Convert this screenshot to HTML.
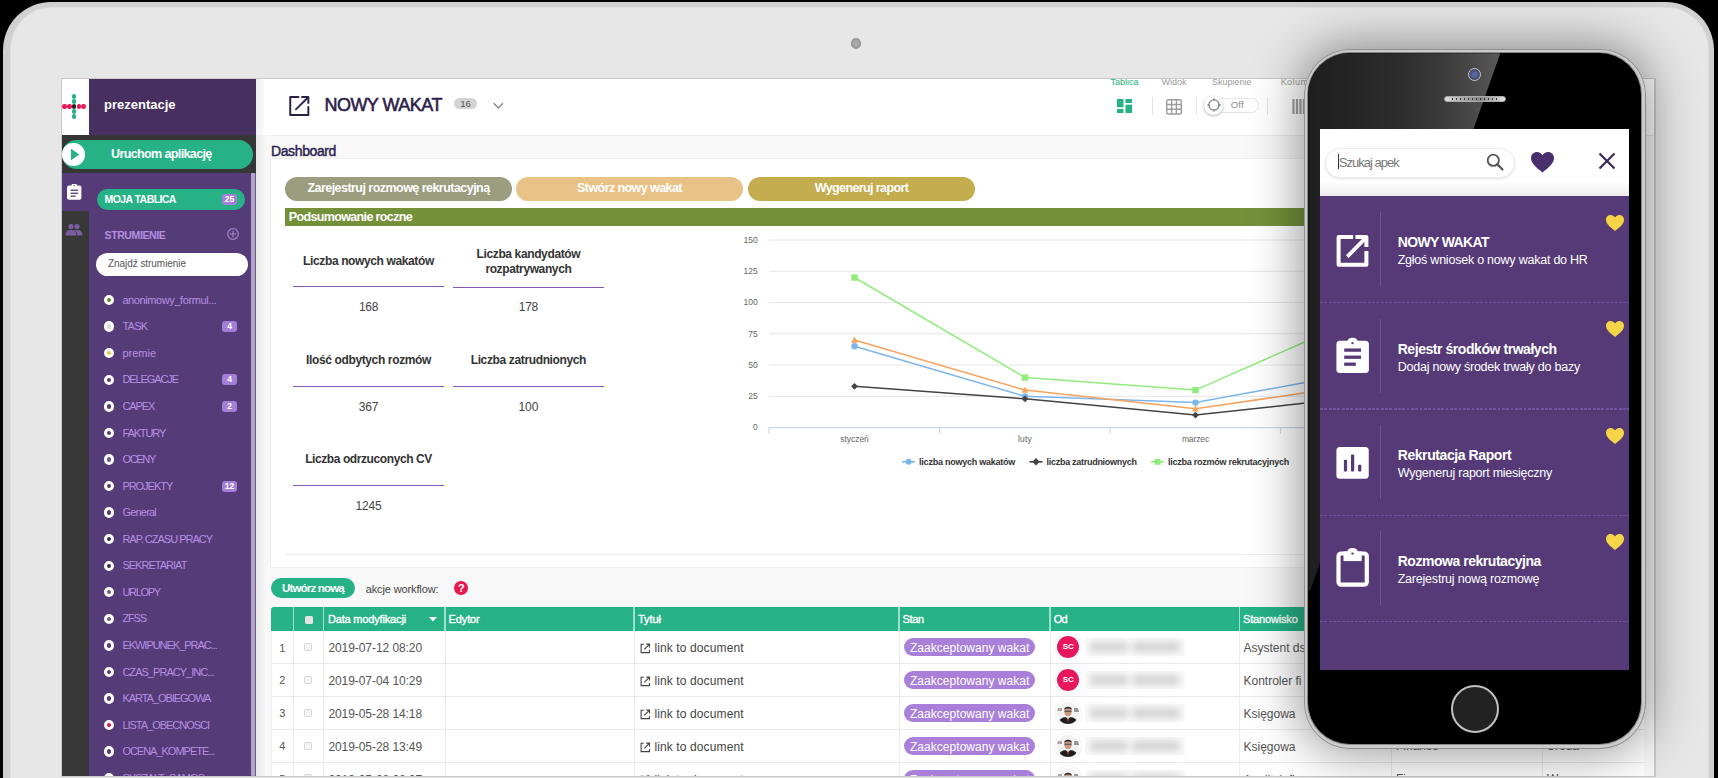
<!DOCTYPE html><html><head><meta charset="utf-8"><style>
*{box-sizing:border-box;margin:0;padding:0}
html,body{width:1718px;height:778px;overflow:hidden;background:#000;font-family:"Liberation Sans",sans-serif}
.a{position:absolute}
.t{position:absolute;white-space:nowrap}
#tab{left:2.8px;top:1.9px;width:1711.2px;height:860px;border-radius:48px;background:#e7e7e7;border-style:solid;border-color:#d0d0d0;border-width:5.2px 5px 0 7px;box-shadow:inset 0 0 0 0.8px #dcdcdc}
#scrb{left:60.5px;top:77.5px;width:1595.5px;height:699.5px;background:#c9c9c9}
#scr{left:62px;top:79px;width:1592px;height:697px;background:#fff;overflow:hidden}
#pg{left:-62px;top:-79px;width:1718px;height:778px}
#cam{left:851px;top:38.3px;width:10.4px;height:10.4px;border-radius:50%;background:#a9a9a9;border:2px solid #999}
.dot{position:absolute;left:103.8px;width:10.4px;height:10.4px;border-radius:50%;border:3px solid #fff}
.bdg{position:absolute;left:222px;width:15px;height:11px;border-radius:3px;background:#a47fd8;color:#fff;font-size:8.5px;text-align:center;line-height:11px;font-weight:bold}
</style></head><body>
<div id="tab" class="a"></div><div id="cam" class="a"></div>
<div id="scrb" class="a"></div><div id="scr" class="a"><div id="pg" class="a">
<div class="a" style="left:256px;top:135px;width:1400px;height:641px;background:#f8f8f8"></div>
<div class="a" style="left:271px;top:134.5px;width:1400px;height:1px;background:#e9e9e9"></div>
<div class="a" style="left:62px;top:79px;width:27px;height:56px;background:#fff"></div>
<div class="a" style="left:62.10px;top:104.30px;width:4.6px;height:4.6px;border-radius:50%;background:#e8185a"></div>
<div class="a" style="left:67.00px;top:104.30px;width:4.6px;height:4.6px;border-radius:50%;background:#e8185a"></div>
<div class="a" style="left:76.50px;top:104.30px;width:4.6px;height:4.6px;border-radius:50%;background:#e8185a"></div>
<div class="a" style="left:81.30px;top:104.30px;width:4.6px;height:4.6px;border-radius:50%;background:#e8185a"></div>
<div class="a" style="left:71.80px;top:94.20px;width:4.6px;height:4.6px;border-radius:50%;background:#23b283"></div>
<div class="a" style="left:71.80px;top:99.30px;width:4.6px;height:4.6px;border-radius:50%;background:#23b283"></div>
<div class="a" style="left:71.80px;top:109.20px;width:4.6px;height:4.6px;border-radius:50%;background:#23b283"></div>
<div class="a" style="left:71.80px;top:114.20px;width:4.6px;height:4.6px;border-radius:50%;background:#23b283"></div>
<div class="a" style="left:71.80px;top:104.30px;width:4.6px;height:4.6px;border-radius:50%;background:#222"></div>
<div class="a" style="left:89px;top:79px;width:167px;height:56px;background:#472f60"></div>
<div id="t1" class="t" style="top:98.15px;font-size:13px;line-height:13px;color:#fff;font-weight:bold;letter-spacing:0.005px;left:104.00px;">prezentacje</div>
<div class="a" style="left:62px;top:135px;width:194px;height:38px;background:#363636"></div>
<div class="a" style="left:62px;top:139.8px;width:190.5px;height:29.4px;border-radius:15px;background:#27b285"></div>
<div class="a" style="left:62.2px;top:143.1px;width:22.6px;height:22.6px;border-radius:50%;background:#fff"></div>
<svg class="a" style="left:62px;top:139px" width="24" height="30"><path d="M9 9.8 L17.3 15.5 L9 21.2 Z" fill="#27b285"/></svg>
<div id="t2" class="t" style="top:148.49px;font-size:12.5px;line-height:12.5px;color:#fff;font-weight:bold;letter-spacing:-0.615px;left:111.00px;">Uruchom aplikację</div>
<div class="a" style="left:62px;top:173px;width:27px;height:603px;background:#383838"></div>
<div class="a" style="left:62px;top:173px;width:27px;height:38px;background:#553b78"></div>
<svg class="a" style="left:66px;top:183px" width="17" height="18"><rect x="1" y="2.5" width="14.4" height="14.3" rx="2" fill="#fff"/><rect x="5.5" y="1" width="5.4" height="3" rx="1.2" fill="#fff"/><circle cx="8.2" cy="2.4" r="0.6" fill="#553b78"/><rect x="4.6" y="6.6" width="7.4" height="1.3" fill="#553b78"/><rect x="4.6" y="9.6" width="7.4" height="1.3" fill="#553b78"/><rect x="4.6" y="12.5" width="5" height="1.3" fill="#553b78"/></svg>
<svg class="a" style="left:65px;top:223px" width="18" height="14"><circle cx="6" cy="3.5" r="2.6" fill="#7a5ea0"/><circle cx="12" cy="3.5" r="2.6" fill="#7a5ea0"/><path d="M0.5 12.5 C0.5 8 3 7 6 7 C9 7 11.5 8 11.5 12.5 Z" fill="#7a5ea0"/><path d="M9 7.3 C10 7 11 7 12 7 C15 7 17.5 8 17.5 12.5 L12.5 12.5 C12.5 10 11 8 9 7.3Z" fill="#7a5ea0"/></svg>
<div class="a" style="left:89px;top:173px;width:162px;height:603px;background:#553b78"></div>
<div class="a" style="left:251px;top:173px;width:5px;height:603px;background:#6d5a88"></div>
<div class="a" style="left:251.4px;top:173px;width:3.4px;height:603px;background:#b2a4c6;border-radius:1px"></div>
<div class="a" style="left:256px;top:79px;width:10px;height:697px;background:linear-gradient(90deg,rgba(0,0,0,0.07),rgba(0,0,0,0))"></div>
<div class="a" style="left:96.8px;top:188.5px;width:148px;height:21.7px;border-radius:11px;background:#27b285"></div>
<div id="t3" class="t" style="top:194.27px;font-size:10.5px;line-height:10.5px;color:#fff;font-weight:bold;letter-spacing:-0.564px;left:104.50px;">MOJA TABLICA</div>
<div class="bdg" style="top:194px">25</div>
<div id="t4" class="t" style="top:229.87px;font-size:10.5px;line-height:10.5px;color:#b48fe0;font-weight:bold;letter-spacing:-0.377px;left:104.50px;">STRUMIENIE</div>
<svg class="a" style="left:226px;top:227px" width="14" height="14"><circle cx="7" cy="7" r="5.3" fill="none" stroke="#9f80c8" stroke-width="1.2"/><path d="M7 3.8V10.2M3.8 7H10.2" stroke="#9f80c8" stroke-width="1.2"/></svg>
<div class="a" style="left:96px;top:252.8px;width:151.7px;height:23.2px;border-radius:12px;background:#fff"></div>
<div id="t5" class="t" style="top:259.12px;font-size:10px;line-height:10px;color:#555;font-weight:normal;letter-spacing:-0.054px;left:108.00px;">Znajdź strumienie</div>
<div class="dot" style="top:294.90px;background:#6a8a2a"></div>
<div id="t6" class="t" style="top:294.73px;font-size:11px;line-height:11px;color:#b78fe2;font-weight:normal;letter-spacing:-0.405px;left:122.40px;">anonimowy_formul...</div>
<div class="dot" style="top:321.46px;background:#d8d8d8"></div>
<div id="t7" class="t" style="top:321.29px;font-size:11px;line-height:11px;color:#b78fe2;font-weight:normal;letter-spacing:-0.730px;left:122.40px;">TASK</div>
<div class="bdg" style="top:321.16px">4</div>
<div class="dot" style="top:348.02px;background:#f0c93a"></div>
<div id="t8" class="t" style="top:347.85px;font-size:11px;line-height:11px;color:#b78fe2;font-weight:normal;letter-spacing:0.000px;left:122.40px;">premie</div>
<div class="dot" style="top:374.58px;background:#553b78"></div>
<div id="t9" class="t" style="top:374.41px;font-size:11px;line-height:11px;color:#b78fe2;font-weight:normal;letter-spacing:-1.091px;left:122.40px;">DELEGACJE</div>
<div class="bdg" style="top:374.28px">4</div>
<div class="dot" style="top:401.14px;background:#553b78"></div>
<div id="t10" class="t" style="top:400.97px;font-size:11px;line-height:11px;color:#b78fe2;font-weight:normal;letter-spacing:-1.059px;left:122.40px;">CAPEX</div>
<div class="bdg" style="top:400.84px">2</div>
<div class="dot" style="top:427.70px;background:#553b78"></div>
<div id="t11" class="t" style="top:427.53px;font-size:11px;line-height:11px;color:#b78fe2;font-weight:normal;letter-spacing:-1.104px;left:122.40px;">FAKTURY</div>
<div class="dot" style="top:454.26px;background:#6c5a8a"></div>
<div id="t12" class="t" style="top:454.09px;font-size:11px;line-height:11px;color:#b78fe2;font-weight:normal;letter-spacing:-1.285px;left:122.40px;">OCENY</div>
<div class="dot" style="top:480.82px;background:#553b78"></div>
<div id="t13" class="t" style="top:480.65px;font-size:11px;line-height:11px;color:#b78fe2;font-weight:normal;letter-spacing:-1.035px;left:122.40px;">PROJEKTY</div>
<div class="bdg" style="top:480.52px">12</div>
<div class="dot" style="top:507.38px;background:#553b78"></div>
<div id="t14" class="t" style="top:507.21px;font-size:11px;line-height:11px;color:#b78fe2;font-weight:normal;letter-spacing:-0.792px;left:122.40px;">General</div>
<div class="dot" style="top:533.94px;background:#3a2a50"></div>
<div id="t15" class="t" style="top:533.77px;font-size:11px;line-height:11px;color:#b78fe2;font-weight:normal;letter-spacing:-0.985px;left:122.40px;">RAP. CZASU PRACY</div>
<div class="dot" style="top:560.50px;background:#3a2a50"></div>
<div id="t16" class="t" style="top:560.33px;font-size:11px;line-height:11px;color:#b78fe2;font-weight:normal;letter-spacing:-0.980px;left:122.40px;">SEKRETARIAT</div>
<div class="dot" style="top:587.06px;background:#6c5a8a"></div>
<div id="t17" class="t" style="top:586.89px;font-size:11px;line-height:11px;color:#b78fe2;font-weight:normal;letter-spacing:-1.325px;left:122.40px;">URLOPY</div>
<div class="dot" style="top:613.62px;background:#6c5a8a"></div>
<div id="t18" class="t" style="top:613.45px;font-size:11px;line-height:11px;color:#b78fe2;font-weight:normal;letter-spacing:-1.156px;left:122.40px;">ZFSS</div>
<div class="dot" style="top:640.18px;background:#553b78"></div>
<div id="t19" class="t" style="top:640.01px;font-size:11px;line-height:11px;color:#b78fe2;font-weight:normal;letter-spacing:-1.027px;left:122.40px;">EKWIPUNEK_PRAC...</div>
<div class="dot" style="top:666.74px;background:#553b78"></div>
<div id="t20" class="t" style="top:666.57px;font-size:11px;line-height:11px;color:#b78fe2;font-weight:normal;letter-spacing:-0.964px;left:122.40px;">CZAS_PRACY_INC...</div>
<div class="dot" style="top:693.30px;background:#553b78"></div>
<div id="t21" class="t" style="top:693.13px;font-size:11px;line-height:11px;color:#b78fe2;font-weight:normal;letter-spacing:-1.036px;left:122.40px;">KARTA_OBIEGOWA</div>
<div class="dot" style="top:719.86px;background:#e0104a"></div>
<div id="t22" class="t" style="top:719.69px;font-size:11px;line-height:11px;color:#b78fe2;font-weight:normal;letter-spacing:-1.019px;left:122.40px;">LISTA_OBECNOSCI</div>
<div class="dot" style="top:746.42px;background:#553b78"></div>
<div id="t23" class="t" style="top:746.25px;font-size:11px;line-height:11px;color:#b78fe2;font-weight:normal;letter-spacing:-1.013px;left:122.40px;">OCENA_KOMPETE...</div>
<div class="dot" style="top:772.98px;background:#553b78"></div>
<div id="t24" class="t" style="top:772.81px;font-size:11px;line-height:11px;color:#b78fe2;font-weight:normal;letter-spacing:-0.944px;left:122.40px;">SYSZALT_SAMOS...</div>
<svg class="a" style="left:284px;top:90px" width="32" height="32"><path d="M15.2 7.05 H6.25 V24.95 H24.35 V16.3" fill="none" stroke="#2b2048" stroke-width="1.95" stroke-linejoin="round"/><path d="M17.3 7.05 H24.35 V13.8" fill="none" stroke="#2b2048" stroke-width="1.95" stroke-linejoin="round"/><path d="M11.4 19.9 L23.9 7.5" stroke="#2b2048" stroke-width="1.9"/></svg>
<div id="t25" class="t" style="top:95.91px;font-size:18px;line-height:18px;color:#2b2048;font-weight:normal;letter-spacing:-0.507px;-webkit-text-stroke:0.55px #2b2048;left:324.40px;">NOWY WAKAT</div>
<div class="a" style="left:454px;top:97.9px;width:23.3px;height:11.5px;border-radius:6px;background:#d3d3d3"></div>
<div id="t26" class="t" style="top:98.96px;font-size:9.5px;line-height:9.5px;color:#555;font-weight:normal;letter-spacing:0.000px;left:165.60px;width:600px;text-align:center;">16</div>
<svg class="a" style="left:490px;top:100px" width="16" height="12"><path d="M3.7 3.2 L8.35 8 L13 3.2" fill="none" stroke="#888" stroke-width="1.3"/></svg>
<div id="t27" class="t" style="top:77.60px;font-size:9px;line-height:9px;color:#27b285;font-weight:normal;letter-spacing:-0.002px;left:1110.40px;">Tablica</div>
<div id="t28" class="t" style="top:77.60px;font-size:9px;line-height:9px;color:#9a9a9a;font-weight:normal;letter-spacing:-0.003px;left:1161.60px;">Widok</div>
<div id="t29" class="t" style="top:77.60px;font-size:9px;line-height:9px;color:#9a9a9a;font-weight:normal;letter-spacing:-0.003px;left:1212.00px;">Skupienie</div>
<div id="t30" class="t" style="top:77.60px;font-size:9px;line-height:9px;color:#9a9a9a;font-weight:normal;letter-spacing:0.426px;left:1280.70px;">Kolumny</div>
<svg class="a" style="left:1117px;top:99px" width="15" height="14"><rect x="0" y="0" width="6.5" height="8.3" fill="#27b285"/><rect x="0" y="10" width="6.5" height="4" fill="#27b285"/><rect x="8.5" y="0" width="6.5" height="4" fill="#27b285"/><rect x="8.5" y="5.7" width="6.5" height="8.3" fill="#27b285"/></svg>
<div class="a" style="left:1151.9px;top:97px;width:1px;height:18px;background:#e3e3e3"></div>
<div class="a" style="left:1195.7px;top:97px;width:1px;height:18px;background:#e3e3e3"></div>
<div class="a" style="left:1266.7px;top:97px;width:1px;height:18px;background:#e3e3e3"></div>
<svg class="a" style="left:1166px;top:99px" width="16" height="16"><rect x="0.7" y="0.7" width="14.6" height="14.3" rx="1.5" fill="none" stroke="#9c9c9c" stroke-width="1.4"/><path d="M5.6 0.7V15M10.4 0.7V15M0.7 5.5H15.3M0.7 10.3H15.3" stroke="#9c9c9c" stroke-width="1.4"/></svg>
<div class="a" style="left:1203.8px;top:97.7px;width:55px;height:15.4px;border-radius:8px;background:#fff;border:1px solid #e6e6e6"></div>
<div class="a" style="left:1203.9px;top:95.8px;width:19.2px;height:19.2px;border-radius:50%;background:#fff;box-shadow:0 1px 3px rgba(0,0,0,0.3)"></div>
<svg class="a" style="left:1205.5px;top:97.4px" width="16" height="16"><circle cx="8" cy="8" r="5.2" fill="none" stroke="#777" stroke-width="1.1"/><path d="M8 1.2V4M8 12V14.8M1.2 8H4M12 8H14.8" stroke="#777" stroke-width="1.1"/></svg>
<div id="t31" class="t" style="top:100.36px;font-size:9.5px;line-height:9.5px;color:#8a8a8a;font-weight:normal;letter-spacing:0.167px;left:1230.70px;">Off</div>
<svg class="a" style="left:1292px;top:99px" width="16" height="15"><path d="M1.5 0V15M5 0V15M8.5 0V15M12 0V15" stroke="#a0a0a0" stroke-width="2.2"/></svg>
<div id="t32" class="t" style="top:144.01px;font-size:14px;line-height:14px;color:#2b2350;font-weight:normal;letter-spacing:-0.389px;-webkit-text-stroke:0.45px #2b2350;left:271.00px;">Dashboard</div>
<div class="a" style="left:270.5px;top:158.7px;width:1375px;height:408.4px;background:#fff;box-shadow:0 0 0 1px #efefef"></div>
<div class="a" style="left:285px;top:177px;width:227.0px;height:23.5px;border-radius:12px;background:#9c9c7e"></div>
<div id="t33" class="t" style="top:182.49px;font-size:12.5px;line-height:12.5px;color:#fff;font-weight:bold;letter-spacing:-0.537px;left:98.50px;width:600px;text-align:center;">Zarejestruj rozmowę rekrutacyjną</div>
<div class="a" style="left:516.3px;top:177px;width:226.4px;height:23.5px;border-radius:12px;background:#e8c287"></div>
<div id="t34" class="t" style="top:182.49px;font-size:12.5px;line-height:12.5px;color:#fff;font-weight:bold;letter-spacing:-0.577px;left:329.50px;width:600px;text-align:center;">Stwórz nowy wakat</div>
<div class="a" style="left:748px;top:177px;width:227.0px;height:23.5px;border-radius:12px;background:#c4ad4e"></div>
<div id="t35" class="t" style="top:182.49px;font-size:12.5px;line-height:12.5px;color:#fff;font-weight:bold;letter-spacing:-0.604px;left:561.50px;width:600px;text-align:center;">Wygeneruj raport</div>
<div class="a" style="left:285px;top:208px;width:1360px;height:18px;background:#74913a"></div>
<div id="t36" class="t" style="top:211.09px;font-size:12.5px;line-height:12.5px;color:#fff;font-weight:bold;letter-spacing:-0.634px;left:288.70px;">Podsumowanie roczne</div>
<div id="t37" class="t" style="top:254.84px;font-size:12px;line-height:12px;color:#333;font-weight:bold;letter-spacing:-0.376px;left:68.50px;width:600px;text-align:center;">Liczba nowych wakatów</div>
<div class="a" style="left:293.3px;top:285.75px;width:150.4px;height:1.3px;background:#8a58bc"></div>
<div id="t38" class="t" style="top:300.74px;font-size:12px;line-height:12px;color:#444;font-weight:normal;letter-spacing:-0.277px;left:68.50px;width:600px;text-align:center;">168</div>
<div id="t39" class="t" style="top:247.64px;font-size:12px;line-height:12px;color:#333;font-weight:bold;letter-spacing:-0.372px;left:228.40px;width:600px;text-align:center;">Liczba kandydatów</div>
<div id="t40" class="t" style="top:262.64px;font-size:12px;line-height:12px;color:#333;font-weight:bold;letter-spacing:-0.383px;left:228.40px;width:600px;text-align:center;">rozpatrywanych</div>
<div class="a" style="left:453.2px;top:286.75px;width:150.4px;height:1.3px;background:#8a58bc"></div>
<div id="t41" class="t" style="top:301.44px;font-size:12px;line-height:12px;color:#444;font-weight:normal;letter-spacing:-0.244px;left:228.40px;width:600px;text-align:center;">178</div>
<div id="t42" class="t" style="top:354.34px;font-size:12px;line-height:12px;color:#333;font-weight:bold;letter-spacing:-0.366px;left:68.50px;width:600px;text-align:center;">Ilość odbytych rozmów</div>
<div class="a" style="left:293.3px;top:385.85px;width:150.4px;height:1.3px;background:#8a58bc"></div>
<div id="t43" class="t" style="top:400.54px;font-size:12px;line-height:12px;color:#444;font-weight:normal;letter-spacing:-0.110px;left:68.50px;width:600px;text-align:center;">367</div>
<div id="t44" class="t" style="top:354.34px;font-size:12px;line-height:12px;color:#333;font-weight:bold;letter-spacing:-0.364px;left:228.40px;width:600px;text-align:center;">Liczba zatrudnionych</div>
<div class="a" style="left:453.2px;top:385.85px;width:150.4px;height:1.3px;background:#8a58bc"></div>
<div id="t45" class="t" style="top:400.54px;font-size:12px;line-height:12px;color:#444;font-weight:normal;letter-spacing:-0.110px;left:228.40px;width:600px;text-align:center;">100</div>
<div id="t46" class="t" style="top:453.44px;font-size:12px;line-height:12px;color:#333;font-weight:bold;letter-spacing:-0.412px;left:68.50px;width:600px;text-align:center;">Liczba odrzuconych CV</div>
<div class="a" style="left:293.3px;top:484.85px;width:150.4px;height:1.3px;background:#8a58bc"></div>
<div id="t47" class="t" style="top:499.54px;font-size:12px;line-height:12px;color:#444;font-weight:normal;letter-spacing:-0.126px;left:68.50px;width:600px;text-align:center;">1245</div>
<div class="a" style="left:285px;top:554px;width:1360px;height:1px;background:#eeeeee"></div>
<svg class="a" style="left:0;top:0" width="1718" height="778"><line x1="769" x2="1645" y1="396.33" y2="396.33" stroke="#e6e6e6" stroke-width="1"/><line x1="769" x2="1645" y1="365.07" y2="365.07" stroke="#e6e6e6" stroke-width="1"/><line x1="769" x2="1645" y1="333.80" y2="333.80" stroke="#e6e6e6" stroke-width="1"/><line x1="769" x2="1645" y1="302.53" y2="302.53" stroke="#e6e6e6" stroke-width="1"/><line x1="769" x2="1645" y1="271.26" y2="271.26" stroke="#e6e6e6" stroke-width="1"/><line x1="769" x2="1645" y1="240.00" y2="240.00" stroke="#e6e6e6" stroke-width="1"/><line x1="769" x2="1645" y1="427.6" y2="427.6" stroke="#ccd6eb" stroke-width="1.2"/><line x1="769.0" x2="769.0" y1="427.6" y2="433.6" stroke="#ccd6eb" stroke-width="1.2"/><line x1="939.5" x2="939.5" y1="427.6" y2="433.6" stroke="#ccd6eb" stroke-width="1.2"/><line x1="1110.0" x2="1110.0" y1="427.6" y2="433.6" stroke="#ccd6eb" stroke-width="1.2"/><line x1="1280.5" x2="1280.5" y1="427.6" y2="433.6" stroke="#ccd6eb" stroke-width="1.2"/><line x1="1451.0" x2="1451.0" y1="427.6" y2="433.6" stroke="#ccd6eb" stroke-width="1.2"/><line x1="1621.5" x2="1621.5" y1="427.6" y2="433.6" stroke="#ccd6eb" stroke-width="1.2"/><polyline points="854.5,346.30 1025.0,396.33 1195.5,402.59 1366.0,371.32" fill="none" stroke="#7cb5ec" stroke-width="1.5"/><circle cx="854.5" cy="346.30" r="3.2" fill="#7cb5ec"/><circle cx="1025" cy="396.33" r="3.2" fill="#7cb5ec"/><circle cx="1195.5" cy="402.59" r="3.2" fill="#7cb5ec"/><circle cx="1366" cy="371.32" r="3.2" fill="#7cb5ec"/><polyline points="854.5,386.33 1025.0,398.83 1195.5,415.09 1366.0,396.33" fill="none" stroke="#434348" stroke-width="1.5"/><path d="M854.5 382.93 L857.9 386.33 L854.5 389.73 L851.1 386.33Z" fill="#434348"/><path d="M1025 395.43 L1028.4 398.83 L1025 402.23 L1021.6 398.83Z" fill="#434348"/><path d="M1195.5 411.69 L1198.9 415.09 L1195.5 418.49 L1192.1 415.09Z" fill="#434348"/><path d="M1366 392.93 L1369.4 396.33 L1366 399.73 L1362.6 396.33Z" fill="#434348"/><polyline points="854.5,277.52 1025.0,377.57 1195.5,390.08 1366.0,315.04" fill="none" stroke="#90ed7d" stroke-width="1.5"/><rect x="851.3" y="274.32" width="6.4" height="6.4" fill="#90ed7d"/><rect x="1021.8" y="374.37" width="6.4" height="6.4" fill="#90ed7d"/><rect x="1192.3" y="386.88" width="6.4" height="6.4" fill="#90ed7d"/><rect x="1362.8" y="311.84" width="6.4" height="6.4" fill="#90ed7d"/><polyline points="854.5,340.05 1025.0,390.08 1195.5,408.84 1366.0,383.83" fill="none" stroke="#f7a35c" stroke-width="1.5"/><path d="M854.5 336.45 L857.9 342.65 L851.1 342.65Z" fill="#f7a35c"/><path d="M1025 386.48 L1028.4 392.68 L1021.6 392.68Z" fill="#f7a35c"/><path d="M1195.5 405.24 L1198.9 411.44 L1192.1 411.44Z" fill="#f7a35c"/><path d="M1366 380.23 L1369.4 386.43 L1362.6 386.43Z" fill="#f7a35c"/><line x1="902" x2="915" y1="461.8" y2="461.8" stroke="#7cb5ec" stroke-width="1.6"/><circle cx="908.6" cy="461.8" r="3" fill="#7cb5ec"/><line x1="1029.5" x2="1042.5" y1="461.8" y2="461.8" stroke="#434348" stroke-width="1.6"/><path d="M1036 458.1 L1039.7 461.8 L1036 465.5 L1032.3 461.8Z" fill="#434348"/><line x1="1151" x2="1164" y1="461.8" y2="461.8" stroke="#90ed7d" stroke-width="1.6"/><rect x="1154.6" y="458.8" width="6" height="6" fill="#90ed7d"/></svg>
<div class="t" style="left:657.7px;width:100px;text-align:right;top:423.30px;font-size:8.5px;line-height:8.5px;color:#666">0</div>
<div class="t" style="left:657.7px;width:100px;text-align:right;top:392.03px;font-size:8.5px;line-height:8.5px;color:#666">25</div>
<div class="t" style="left:657.7px;width:100px;text-align:right;top:360.77px;font-size:8.5px;line-height:8.5px;color:#666">50</div>
<div class="t" style="left:657.7px;width:100px;text-align:right;top:329.50px;font-size:8.5px;line-height:8.5px;color:#666">75</div>
<div class="t" style="left:657.7px;width:100px;text-align:right;top:298.23px;font-size:8.5px;line-height:8.5px;color:#666">100</div>
<div class="t" style="left:657.7px;width:100px;text-align:right;top:266.96px;font-size:8.5px;line-height:8.5px;color:#666">125</div>
<div class="t" style="left:657.7px;width:100px;text-align:right;top:235.70px;font-size:8.5px;line-height:8.5px;color:#666">150</div>
<div id="t48" class="t" style="top:434.65px;font-size:8.5px;line-height:8.5px;color:#666;font-weight:normal;letter-spacing:-0.033px;left:554.50px;width:600px;text-align:center;">styczeń</div>
<div id="t49" class="t" style="top:434.65px;font-size:8.5px;line-height:8.5px;color:#666;font-weight:normal;letter-spacing:0.191px;left:725.00px;width:600px;text-align:center;">luty</div>
<div id="t50" class="t" style="top:434.65px;font-size:8.5px;line-height:8.5px;color:#666;font-weight:normal;letter-spacing:-0.113px;left:895.50px;width:600px;text-align:center;">marzec</div>
<div id="t51" class="t" style="top:458.20px;font-size:9px;line-height:9px;color:#333;font-weight:bold;letter-spacing:-0.240px;left:919.10px;">liczba nowych wakatów</div>
<div id="t52" class="t" style="top:458.20px;font-size:9px;line-height:9px;color:#333;font-weight:bold;letter-spacing:-0.286px;left:1046.60px;">liczba zatrudniownych</div>
<div id="t53" class="t" style="top:458.20px;font-size:9px;line-height:9px;color:#333;font-weight:bold;letter-spacing:-0.252px;left:1168.10px;">liczba rozmów rekrutacyjnych</div>
<div class="a" style="left:270.8px;top:578px;width:83.8px;height:20.4px;border-radius:10.2px;background:#27b285"></div>
<div id="t54" class="t" style="top:582.58px;font-size:11.5px;line-height:11.5px;color:#fff;font-weight:bold;letter-spacing:-0.820px;left:12.90px;width:600px;text-align:center;">Utwórz nową</div>
<div id="t55" class="t" style="top:583.73px;font-size:11px;line-height:11px;color:#444;font-weight:normal;letter-spacing:-0.125px;left:365.70px;">akcje workflow:</div>
<div class="a" style="left:454.3px;top:581.2px;width:14px;height:14px;border-radius:50%;background:#e8184d"></div>
<div id="t56" class="t" style="top:582.83px;font-size:11px;line-height:11px;color:#fff;font-weight:bold;letter-spacing:0.000px;left:161.30px;width:600px;text-align:center;">?</div>
<div class="a" style="left:271px;top:607.1px;width:1373px;height:24.1px;border-radius:3px 3px 0 0;background:#26b286"></div>
<div class="a" style="left:271px;top:631.2px;width:1373px;height:150px;background:#fff"></div>
<div class="a" style="left:292.55px;top:607.1px;width:1.5px;height:24.1px;background:#9fe0c8"></div>
<div class="a" style="left:292.80px;top:631.2px;width:1px;height:150px;background:#ececec"></div>
<div class="a" style="left:322.95px;top:607.1px;width:1.5px;height:24.1px;background:#9fe0c8"></div>
<div class="a" style="left:323.20px;top:631.2px;width:1px;height:150px;background:#ececec"></div>
<div class="a" style="left:444.25px;top:607.1px;width:1.5px;height:24.1px;background:#9fe0c8"></div>
<div class="a" style="left:444.50px;top:631.2px;width:1px;height:150px;background:#ececec"></div>
<div class="a" style="left:633.25px;top:607.1px;width:1.5px;height:24.1px;background:#9fe0c8"></div>
<div class="a" style="left:633.50px;top:631.2px;width:1px;height:150px;background:#ececec"></div>
<div class="a" style="left:898.25px;top:607.1px;width:1.5px;height:24.1px;background:#9fe0c8"></div>
<div class="a" style="left:898.50px;top:631.2px;width:1px;height:150px;background:#ececec"></div>
<div class="a" style="left:1049.35px;top:607.1px;width:1.5px;height:24.1px;background:#9fe0c8"></div>
<div class="a" style="left:1049.60px;top:631.2px;width:1px;height:150px;background:#ececec"></div>
<div class="a" style="left:1238.55px;top:607.1px;width:1.5px;height:24.1px;background:#9fe0c8"></div>
<div class="a" style="left:1238.80px;top:631.2px;width:1px;height:150px;background:#ececec"></div>
<div class="a" style="left:1390.35px;top:607.1px;width:1.5px;height:24.1px;background:#9fe0c8"></div>
<div class="a" style="left:1390.60px;top:631.2px;width:1px;height:150px;background:#ececec"></div>
<div class="a" style="left:1541.75px;top:607.1px;width:1.5px;height:24.1px;background:#9fe0c8"></div>
<div class="a" style="left:1542.00px;top:631.2px;width:1px;height:150px;background:#ececec"></div>
<div class="a" style="left:271px;top:631.2px;width:1px;height:150px;background:#ececec"></div>
<div class="a" style="left:305.3px;top:615.9px;width:8px;height:8px;border-radius:1.5px;background:#e4e4e4"></div>
<svg class="a" style="left:428px;top:616px" width="10" height="7"><path d="M1 1 H9 L5 5.5Z" fill="#fff"/></svg>
<div id="t57" class="t" style="top:614.13px;font-size:11px;line-height:11px;color:#fff;font-weight:normal;letter-spacing:-0.163px;-webkit-text-stroke:0.35px #fff;left:327.90px;">Data modyfikacji</div>
<div id="t58" class="t" style="top:614.13px;font-size:11px;line-height:11px;color:#fff;font-weight:normal;letter-spacing:-0.133px;-webkit-text-stroke:0.35px #fff;left:448.60px;">Edytor</div>
<div id="t59" class="t" style="top:614.13px;font-size:11px;line-height:11px;color:#fff;font-weight:normal;letter-spacing:-0.047px;-webkit-text-stroke:0.35px #fff;left:638.00px;">Tytuł</div>
<div id="t60" class="t" style="top:614.13px;font-size:11px;line-height:11px;color:#fff;font-weight:normal;letter-spacing:-0.285px;-webkit-text-stroke:0.35px #fff;left:902.40px;">Stan</div>
<div id="t61" class="t" style="top:614.13px;font-size:11px;line-height:11px;color:#fff;font-weight:normal;letter-spacing:-0.844px;-webkit-text-stroke:0.35px #fff;left:1053.80px;">Od</div>
<div id="t62" class="t" style="top:614.13px;font-size:11px;line-height:11px;color:#fff;font-weight:normal;letter-spacing:-0.167px;-webkit-text-stroke:0.35px #fff;left:1243.00px;">Stanowisko</div>
<div id="t63" class="t" style="top:614.13px;font-size:11px;line-height:11px;color:#fff;font-weight:normal;letter-spacing:0.109px;-webkit-text-stroke:0.35px #fff;left:1395.00px;">Dział</div>
<div id="t64" class="t" style="top:614.13px;font-size:11px;line-height:11px;color:#fff;font-weight:normal;letter-spacing:-0.220px;-webkit-text-stroke:0.35px #fff;left:1546.00px;">Lokalizacja</div>
<div class="a" style="left:271px;top:663.30px;width:1373px;height:1px;background:#e9e9e9"></div>
<div id="t65" class="t" style="top:642.53px;font-size:11px;line-height:11px;color:#555;font-weight:normal;letter-spacing:0.000px;left:-17.60px;width:600px;text-align:center;">1</div>
<div class="a" style="left:304.4px;top:642.80px;width:8px;height:8px;border-radius:1.5px;background:#f5f5f5;border:1px solid #d5d5d5"></div>
<div id="t66" class="t" style="top:642.24px;font-size:12px;line-height:12px;color:#555;font-weight:normal;letter-spacing:-0.066px;left:328.40px;">2019-07-12 08:20</div>
<svg class="a" style="left:639.5px;top:643.10px" width="11" height="11"><path d="M3.8 1.2H1.1V9.6H9.5V6.9" fill="none" stroke="#444" stroke-width="1.1"/><path d="M4.3 6.4L9.3 1.4M6.2 1.1H9.5V4.4" fill="none" stroke="#444" stroke-width="1.1"/></svg>
<div id="t67" class="t" style="top:642.24px;font-size:12px;line-height:12px;color:#444;font-weight:normal;letter-spacing:0.119px;left:654.40px;">link to document</div>
<div class="a" style="left:903.8px;top:638.20px;width:131.7px;height:18.2px;border-radius:9px;background:#a97fd9"></div>
<div id="t68" class="t" style="top:642.04px;font-size:12px;line-height:12px;color:#fff;font-weight:normal;letter-spacing:0.035px;left:910.00px;">Zaakceptowany wakat</div>
<div class="a" style="left:1055.3px;top:634.30px;width:26px;height:26px;border-radius:50%;background:#fff;box-shadow:0 0 2px rgba(0,0,0,0.15)"></div>
<div class="a" style="left:1057.3px;top:636.30px;width:22px;height:22px;border-radius:50%;background:#e8175d"></div>
<div id="t69" class="t" style="top:642.89px;font-size:8px;line-height:8px;color:#fff;font-weight:bold;letter-spacing:0.000px;left:768.30px;width:600px;text-align:center;">SC</div>
<div class="a" style="left:1085px;top:638.30px;width:100px;height:18px;background:rgba(238,238,238,0.4)"></div>
<div class="a" style="left:1090px;top:642.30px;width:38px;height:10px;background:rgba(110,110,110,0.25);filter:blur(3px);border-radius:4px"></div>
<div class="a" style="left:1132px;top:642.30px;width:48px;height:10px;background:rgba(110,110,110,0.25);filter:blur(3px);border-radius:4px"></div>
<div id="t70" class="t" style="top:642.24px;font-size:12px;line-height:12px;color:#555;font-weight:normal;letter-spacing:0.000px;left:1243.50px;">Asystent ds</div>
<div id="t71" class="t" style="top:641.44px;font-size:12px;line-height:12px;color:#555;font-weight:normal;letter-spacing:0.000px;left:1396.00px;">Finanse</div>
<div id="t72" class="t" style="top:641.44px;font-size:12px;line-height:12px;color:#555;font-weight:normal;letter-spacing:0.000px;left:1547.00px;">Sroda</div>
<div class="a" style="left:271px;top:696.20px;width:1373px;height:1px;background:#e9e9e9"></div>
<div id="t73" class="t" style="top:675.43px;font-size:11px;line-height:11px;color:#555;font-weight:normal;letter-spacing:0.000px;left:-17.60px;width:600px;text-align:center;">2</div>
<div class="a" style="left:304.4px;top:675.70px;width:8px;height:8px;border-radius:1.5px;background:#f5f5f5;border:1px solid #d5d5d5"></div>
<div id="t74" class="t" style="top:675.14px;font-size:12px;line-height:12px;color:#555;font-weight:normal;letter-spacing:-0.066px;left:328.40px;">2019-07-04 10:29</div>
<svg class="a" style="left:639.5px;top:676.00px" width="11" height="11"><path d="M3.8 1.2H1.1V9.6H9.5V6.9" fill="none" stroke="#444" stroke-width="1.1"/><path d="M4.3 6.4L9.3 1.4M6.2 1.1H9.5V4.4" fill="none" stroke="#444" stroke-width="1.1"/></svg>
<div id="t75" class="t" style="top:675.14px;font-size:12px;line-height:12px;color:#444;font-weight:normal;letter-spacing:0.119px;left:654.40px;">link to document</div>
<div class="a" style="left:903.8px;top:671.10px;width:131.7px;height:18.2px;border-radius:9px;background:#a97fd9"></div>
<div id="t76" class="t" style="top:674.94px;font-size:12px;line-height:12px;color:#fff;font-weight:normal;letter-spacing:0.035px;left:910.00px;">Zaakceptowany wakat</div>
<div class="a" style="left:1055.3px;top:667.20px;width:26px;height:26px;border-radius:50%;background:#fff;box-shadow:0 0 2px rgba(0,0,0,0.15)"></div>
<div class="a" style="left:1057.3px;top:669.20px;width:22px;height:22px;border-radius:50%;background:#e8175d"></div>
<div id="t77" class="t" style="top:675.79px;font-size:8px;line-height:8px;color:#fff;font-weight:bold;letter-spacing:0.000px;left:768.30px;width:600px;text-align:center;">SC</div>
<div class="a" style="left:1085px;top:671.20px;width:100px;height:18px;background:rgba(238,238,238,0.4)"></div>
<div class="a" style="left:1090px;top:675.20px;width:38px;height:10px;background:rgba(110,110,110,0.25);filter:blur(3px);border-radius:4px"></div>
<div class="a" style="left:1132px;top:675.20px;width:48px;height:10px;background:rgba(110,110,110,0.25);filter:blur(3px);border-radius:4px"></div>
<div id="t78" class="t" style="top:675.14px;font-size:12px;line-height:12px;color:#555;font-weight:normal;letter-spacing:0.000px;left:1243.50px;">Kontroler fi</div>
<div id="t79" class="t" style="top:674.34px;font-size:12px;line-height:12px;color:#555;font-weight:normal;letter-spacing:0.000px;left:1396.00px;">Finanse</div>
<div id="t80" class="t" style="top:674.34px;font-size:12px;line-height:12px;color:#555;font-weight:normal;letter-spacing:0.000px;left:1547.00px;">Sroda</div>
<div class="a" style="left:271px;top:729.10px;width:1373px;height:1px;background:#e9e9e9"></div>
<div id="t81" class="t" style="top:708.33px;font-size:11px;line-height:11px;color:#555;font-weight:normal;letter-spacing:0.000px;left:-17.60px;width:600px;text-align:center;">3</div>
<div class="a" style="left:304.4px;top:708.60px;width:8px;height:8px;border-radius:1.5px;background:#f5f5f5;border:1px solid #d5d5d5"></div>
<div id="t82" class="t" style="top:708.04px;font-size:12px;line-height:12px;color:#555;font-weight:normal;letter-spacing:-0.066px;left:328.40px;">2019-05-28 14:18</div>
<svg class="a" style="left:639.5px;top:708.90px" width="11" height="11"><path d="M3.8 1.2H1.1V9.6H9.5V6.9" fill="none" stroke="#444" stroke-width="1.1"/><path d="M4.3 6.4L9.3 1.4M6.2 1.1H9.5V4.4" fill="none" stroke="#444" stroke-width="1.1"/></svg>
<div id="t83" class="t" style="top:708.04px;font-size:12px;line-height:12px;color:#444;font-weight:normal;letter-spacing:0.119px;left:654.40px;">link to document</div>
<div class="a" style="left:903.8px;top:704.00px;width:131.7px;height:18.2px;border-radius:9px;background:#a97fd9"></div>
<div id="t84" class="t" style="top:707.84px;font-size:12px;line-height:12px;color:#fff;font-weight:normal;letter-spacing:0.035px;left:910.00px;">Zaakceptowany wakat</div>
<div class="a" style="left:1055.3px;top:700.10px;width:26px;height:26px;border-radius:50%;background:#fff;box-shadow:0 0 2px rgba(0,0,0,0.15)"></div>
<svg class="a" style="left:1057.3px;top:702.10px" width="22" height="22"><defs><clipPath id="cp2"><circle cx="11" cy="11" r="11"/></clipPath></defs><g clip-path="url(#cp2)"><rect width="22" height="22" fill="#f2f2f2"/><rect x="0" y="6" width="5" height="3" fill="#aaa"/><rect x="17" y="6" width="5" height="4" fill="#999"/><path d="M1 23 C2 16 6 15 11 15 C16 15 20 16 21 23Z" fill="#1e1e1e"/><path d="M9.6 15 L11 21 L12.4 15Z" fill="#c0392b"/><path d="M8.5 15 L11 17 L13.5 15Z" fill="#ddd"/><ellipse cx="11" cy="9.5" rx="3.8" ry="4.8" fill="#c99a80"/><path d="M7 8 C7 3.8 15 3.8 15 8 C14 6 8 6 7 8Z" fill="#2a2a2a"/><rect x="7.6" y="8.6" width="6.8" height="1.3" fill="#333" opacity="0.7"/></g></svg>
<div class="a" style="left:1085px;top:704.10px;width:100px;height:18px;background:rgba(238,238,238,0.4)"></div>
<div class="a" style="left:1090px;top:708.10px;width:38px;height:10px;background:rgba(110,110,110,0.25);filter:blur(3px);border-radius:4px"></div>
<div class="a" style="left:1132px;top:708.10px;width:48px;height:10px;background:rgba(110,110,110,0.25);filter:blur(3px);border-radius:4px"></div>
<div id="t85" class="t" style="top:708.04px;font-size:12px;line-height:12px;color:#555;font-weight:normal;letter-spacing:0.000px;left:1243.50px;">Księgowa</div>
<div id="t86" class="t" style="top:707.24px;font-size:12px;line-height:12px;color:#555;font-weight:normal;letter-spacing:0.000px;left:1396.00px;">Finanse</div>
<div id="t87" class="t" style="top:707.24px;font-size:12px;line-height:12px;color:#555;font-weight:normal;letter-spacing:0.000px;left:1547.00px;">Sroda</div>
<div class="a" style="left:271px;top:762.00px;width:1373px;height:1px;background:#e9e9e9"></div>
<div id="t88" class="t" style="top:741.23px;font-size:11px;line-height:11px;color:#555;font-weight:normal;letter-spacing:0.000px;left:-17.60px;width:600px;text-align:center;">4</div>
<div class="a" style="left:304.4px;top:741.50px;width:8px;height:8px;border-radius:1.5px;background:#f5f5f5;border:1px solid #d5d5d5"></div>
<div id="t89" class="t" style="top:740.94px;font-size:12px;line-height:12px;color:#555;font-weight:normal;letter-spacing:-0.066px;left:328.40px;">2019-05-28 13:49</div>
<svg class="a" style="left:639.5px;top:741.80px" width="11" height="11"><path d="M3.8 1.2H1.1V9.6H9.5V6.9" fill="none" stroke="#444" stroke-width="1.1"/><path d="M4.3 6.4L9.3 1.4M6.2 1.1H9.5V4.4" fill="none" stroke="#444" stroke-width="1.1"/></svg>
<div id="t90" class="t" style="top:740.94px;font-size:12px;line-height:12px;color:#444;font-weight:normal;letter-spacing:0.119px;left:654.40px;">link to document</div>
<div class="a" style="left:903.8px;top:736.90px;width:131.7px;height:18.2px;border-radius:9px;background:#a97fd9"></div>
<div id="t91" class="t" style="top:740.74px;font-size:12px;line-height:12px;color:#fff;font-weight:normal;letter-spacing:0.035px;left:910.00px;">Zaakceptowany wakat</div>
<div class="a" style="left:1055.3px;top:733.00px;width:26px;height:26px;border-radius:50%;background:#fff;box-shadow:0 0 2px rgba(0,0,0,0.15)"></div>
<svg class="a" style="left:1057.3px;top:735.00px" width="22" height="22"><defs><clipPath id="cp3"><circle cx="11" cy="11" r="11"/></clipPath></defs><g clip-path="url(#cp3)"><rect width="22" height="22" fill="#f2f2f2"/><rect x="0" y="6" width="5" height="3" fill="#aaa"/><rect x="17" y="6" width="5" height="4" fill="#999"/><path d="M1 23 C2 16 6 15 11 15 C16 15 20 16 21 23Z" fill="#1e1e1e"/><path d="M9.6 15 L11 21 L12.4 15Z" fill="#c0392b"/><path d="M8.5 15 L11 17 L13.5 15Z" fill="#ddd"/><ellipse cx="11" cy="9.5" rx="3.8" ry="4.8" fill="#c99a80"/><path d="M7 8 C7 3.8 15 3.8 15 8 C14 6 8 6 7 8Z" fill="#2a2a2a"/><rect x="7.6" y="8.6" width="6.8" height="1.3" fill="#333" opacity="0.7"/></g></svg>
<div class="a" style="left:1085px;top:737.00px;width:100px;height:18px;background:rgba(238,238,238,0.4)"></div>
<div class="a" style="left:1090px;top:741.00px;width:38px;height:10px;background:rgba(110,110,110,0.25);filter:blur(3px);border-radius:4px"></div>
<div class="a" style="left:1132px;top:741.00px;width:48px;height:10px;background:rgba(110,110,110,0.25);filter:blur(3px);border-radius:4px"></div>
<div id="t92" class="t" style="top:740.94px;font-size:12px;line-height:12px;color:#555;font-weight:normal;letter-spacing:0.000px;left:1243.50px;">Księgowa</div>
<div id="t93" class="t" style="top:740.14px;font-size:12px;line-height:12px;color:#555;font-weight:normal;letter-spacing:0.000px;left:1396.00px;">Finanse</div>
<div id="t94" class="t" style="top:740.14px;font-size:12px;line-height:12px;color:#555;font-weight:normal;letter-spacing:0.000px;left:1547.00px;">Sroda</div>
<div class="a" style="left:271px;top:794.90px;width:1373px;height:1px;background:#e9e9e9"></div>
<div id="t95" class="t" style="top:774.13px;font-size:11px;line-height:11px;color:#555;font-weight:normal;letter-spacing:0.000px;left:-17.60px;width:600px;text-align:center;">5</div>
<div class="a" style="left:304.4px;top:774.40px;width:8px;height:8px;border-radius:1.5px;background:#f5f5f5;border:1px solid #d5d5d5"></div>
<div id="t96" class="t" style="top:773.84px;font-size:12px;line-height:12px;color:#555;font-weight:normal;letter-spacing:-0.066px;left:328.40px;">2019-05-28 06:07</div>
<svg class="a" style="left:639.5px;top:774.70px" width="11" height="11"><path d="M3.8 1.2H1.1V9.6H9.5V6.9" fill="none" stroke="#444" stroke-width="1.1"/><path d="M4.3 6.4L9.3 1.4M6.2 1.1H9.5V4.4" fill="none" stroke="#444" stroke-width="1.1"/></svg>
<div id="t97" class="t" style="top:773.84px;font-size:12px;line-height:12px;color:#444;font-weight:normal;letter-spacing:0.119px;left:654.40px;">link to document</div>
<div class="a" style="left:903.8px;top:769.80px;width:131.7px;height:18.2px;border-radius:9px;background:#a97fd9"></div>
<div id="t98" class="t" style="top:773.64px;font-size:12px;line-height:12px;color:#fff;font-weight:normal;letter-spacing:0.035px;left:910.00px;">Zaakceptowany wakat</div>
<div class="a" style="left:1055.3px;top:765.90px;width:26px;height:26px;border-radius:50%;background:#fff;box-shadow:0 0 2px rgba(0,0,0,0.15)"></div>
<svg class="a" style="left:1057.3px;top:767.90px" width="22" height="22"><defs><clipPath id="cp4"><circle cx="11" cy="11" r="11"/></clipPath></defs><g clip-path="url(#cp4)"><rect width="22" height="22" fill="#f2f2f2"/><rect x="0" y="6" width="5" height="3" fill="#aaa"/><rect x="17" y="6" width="5" height="4" fill="#999"/><path d="M1 23 C2 16 6 15 11 15 C16 15 20 16 21 23Z" fill="#1e1e1e"/><path d="M9.6 15 L11 21 L12.4 15Z" fill="#c0392b"/><path d="M8.5 15 L11 17 L13.5 15Z" fill="#ddd"/><ellipse cx="11" cy="9.5" rx="3.8" ry="4.8" fill="#c99a80"/><path d="M7 8 C7 3.8 15 3.8 15 8 C14 6 8 6 7 8Z" fill="#2a2a2a"/><rect x="7.6" y="8.6" width="6.8" height="1.3" fill="#333" opacity="0.7"/></g></svg>
<div class="a" style="left:1085px;top:769.90px;width:100px;height:18px;background:rgba(238,238,238,0.4)"></div>
<div class="a" style="left:1090px;top:773.90px;width:38px;height:10px;background:rgba(110,110,110,0.25);filter:blur(3px);border-radius:4px"></div>
<div class="a" style="left:1132px;top:773.90px;width:48px;height:10px;background:rgba(110,110,110,0.25);filter:blur(3px);border-radius:4px"></div>
<div id="t99" class="t" style="top:773.84px;font-size:12px;line-height:12px;color:#555;font-weight:normal;letter-spacing:0.000px;left:1243.50px;">Analityk fi</div>
<div id="t100" class="t" style="top:773.04px;font-size:12px;line-height:12px;color:#555;font-weight:normal;letter-spacing:0.000px;left:1396.00px;">Finanse</div>
<div id="t101" class="t" style="top:773.04px;font-size:12px;line-height:12px;color:#555;font-weight:normal;letter-spacing:0.000px;left:1547.00px;">Warszawa</div>
</div></div>
<div class="a" style="left:1304px;top:49px;width:341.5px;height:699.8px;border-radius:46px;box-shadow:0 0 50px 4px rgba(0,0,0,0.42)"></div>
<div class="a" style="left:1304px;top:49px;width:341.5px;height:699.8px;border-radius:46px;background:#8f8f8f"></div>
<div class="a" style="left:1305px;top:50px;width:339.5px;height:697.8px;border-radius:45px;background:#cbcbcb"></div>
<div class="a" style="left:1307.4px;top:52.4px;width:334.7px;height:693.0px;border-radius:42.6px;background:#878787"></div>
<div class="a" style="left:1308.3px;top:53.3px;width:332.9px;height:691.1999999999999px;border-radius:41.7px;background:#000;overflow:hidden"><div class="a" style="left:0;top:0;width:193px;height:700px;background:linear-gradient(90deg,#1e1e1e 0%,#242424 20%,#2d2d2d 48%,#3b3b3b 70%,#4a4a4a 86%,#5a5a5a 100%);clip-path:polygon(0 0,192px 0,2px 537px,0 537px)"></div></div>
<div class="a" style="left:1468.3px;top:67.9px;width:13px;height:13px;border-radius:50%;background:radial-gradient(circle at 50% 50%,#5078b0 0,#54548a 45%,#3c3c48 80%);border:1.1px solid #c8c8c8"></div>
<div class="a" style="left:1444.4px;top:95.8px;width:61.2px;height:6px;border-radius:3px;background:linear-gradient(90deg,#e0e0e0,#aaa 30%,#888 60%,#ccc 90%,#e8e8e8);border:0.5px solid #aaa"></div>
<div class="a" style="left:1452px;top:97.8px;width:46px;height:2px;background:repeating-linear-gradient(90deg,#333 0 1.5px,transparent 1.5px 4px)"></div>
<div class="a" style="left:1320px;top:129px;width:308.6px;height:541.2px;background:#553a77;overflow:hidden">
<div class="a" style="left:0;top:0;width:309px;height:67.4px;background:linear-gradient(180deg,#fff 0%,#fff 78%,#ececec 100%)"></div>
<div class="a" style="left:5px;top:18.6px;width:189.6px;height:30.1px;border-radius:15px;background:#fff;border:1px solid #ececec;box-shadow:0 1px 3px rgba(0,0,0,0.12)"></div>
<div class="a" style="left:18px;top:25px;width:1.2px;height:15px;background:#333"></div>
</div>
<div id="t102" class="t" style="top:155.95px;font-size:13px;line-height:13px;color:#777;font-weight:normal;letter-spacing:-0.984px;left:1338.80px;">Szukaj apek</div>
<svg class="a" style="left:1485px;top:152px" width="20" height="20"><circle cx="8.3" cy="8.3" r="5.6" fill="none" stroke="#555" stroke-width="1.8"/><path d="M12.4 12.4 L17.5 17.5" stroke="#555" stroke-width="2.2" stroke-linecap="round"/></svg>
<svg class="a" style="left:1530px;top:151px" width="25" height="23"><path d="M12.5 21.5 C5 15.5 1 11.8 1 7 C1 3.5 3.7 1 7 1 C9.4 1 11.3 2.3 12.5 4.3 C13.7 2.3 15.6 1 18 1 C21.3 1 24 3.5 24 7 C24 11.8 20 15.5 12.5 21.5Z" fill="#4a2f6e"/></svg>
<svg class="a" style="left:1597px;top:151px" width="20" height="20"><path d="M2.5 2.5 L17.5 17.5 M17.5 2.5 L2.5 17.5" stroke="#3a2858" stroke-width="2.2"/></svg>
<div class="a" style="left:1320px;top:301.7px;width:308.6px;height:1.6px;background:repeating-linear-gradient(90deg,#7054a2 0 2.9px,transparent 2.9px 4.33px)"></div>
<div class="a" style="left:1379.5px;top:212.3px;width:1.3px;height:74px;background:rgba(255,255,255,0.14)"></div>
<div id="t103" class="t" style="top:235.16px;font-size:14px;line-height:14px;color:#fff;font-weight:bold;letter-spacing:-0.618px;left:1397.70px;">NOWY WAKAT</div>
<div id="t104" class="t" style="top:253.99px;font-size:12.5px;line-height:12.5px;color:#fff;font-weight:normal;letter-spacing:-0.229px;left:1397.70px;">Zgłoś wniosek o nowy wakat do HR</div>
<svg class="a" style="left:1605px;top:213.8px" width="20" height="18"><path d="M10 17 C4 12.5 1 9.5 1 5.8 C1 3 3.1 1 5.7 1 C7.6 1 9 2 10 3.6 C11 2 12.4 1 14.3 1 C16.9 1 19 3 19 5.8 C19 9.5 16 12.5 10 17Z" fill="#f5d547"/></svg>
<div class="a" style="left:1320px;top:408.3px;width:308.6px;height:1.6px;background:repeating-linear-gradient(90deg,#7054a2 0 2.9px,transparent 2.9px 4.33px)"></div>
<div class="a" style="left:1379.5px;top:318.9px;width:1.3px;height:74px;background:rgba(255,255,255,0.14)"></div>
<div id="t105" class="t" style="top:341.76px;font-size:14px;line-height:14px;color:#fff;font-weight:bold;letter-spacing:-0.443px;left:1397.70px;">Rejestr środków trwałych</div>
<div id="t106" class="t" style="top:360.59px;font-size:12.5px;line-height:12.5px;color:#fff;font-weight:normal;letter-spacing:-0.231px;left:1397.70px;">Dodaj nowy środek trwały do bazy</div>
<svg class="a" style="left:1605px;top:320.4px" width="20" height="18"><path d="M10 17 C4 12.5 1 9.5 1 5.8 C1 3 3.1 1 5.7 1 C7.6 1 9 2 10 3.6 C11 2 12.4 1 14.3 1 C16.9 1 19 3 19 5.8 C19 9.5 16 12.5 10 17Z" fill="#f5d547"/></svg>
<div class="a" style="left:1320px;top:514.7px;width:308.6px;height:1.6px;background:repeating-linear-gradient(90deg,#7054a2 0 2.9px,transparent 2.9px 4.33px)"></div>
<div class="a" style="left:1379.5px;top:425.3px;width:1.3px;height:74px;background:rgba(255,255,255,0.14)"></div>
<div id="t107" class="t" style="top:448.16px;font-size:14px;line-height:14px;color:#fff;font-weight:bold;letter-spacing:-0.417px;left:1397.70px;">Rekrutacja Raport</div>
<div id="t108" class="t" style="top:466.99px;font-size:12.5px;line-height:12.5px;color:#fff;font-weight:normal;letter-spacing:-0.250px;left:1397.70px;">Wygeneruj raport miesięczny</div>
<svg class="a" style="left:1605px;top:426.8px" width="20" height="18"><path d="M10 17 C4 12.5 1 9.5 1 5.8 C1 3 3.1 1 5.7 1 C7.6 1 9 2 10 3.6 C11 2 12.4 1 14.3 1 C16.9 1 19 3 19 5.8 C19 9.5 16 12.5 10 17Z" fill="#f5d547"/></svg>
<div class="a" style="left:1320px;top:620.6px;width:308.6px;height:1.6px;background:repeating-linear-gradient(90deg,#7054a2 0 2.9px,transparent 2.9px 4.33px)"></div>
<div class="a" style="left:1379.5px;top:531.2px;width:1.3px;height:74px;background:rgba(255,255,255,0.14)"></div>
<div id="t109" class="t" style="top:554.06px;font-size:14px;line-height:14px;color:#fff;font-weight:bold;letter-spacing:-0.465px;left:1397.70px;">Rozmowa rekrutacyjna</div>
<div id="t110" class="t" style="top:572.89px;font-size:12.5px;line-height:12.5px;color:#fff;font-weight:normal;letter-spacing:-0.212px;left:1397.70px;">Zarejestruj nową rozmowę</div>
<svg class="a" style="left:1605px;top:532.7px" width="20" height="18"><path d="M10 17 C4 12.5 1 9.5 1 5.8 C1 3 3.1 1 5.7 1 C7.6 1 9 2 10 3.6 C11 2 12.4 1 14.3 1 C16.9 1 19 3 19 5.8 C19 9.5 16 12.5 10 17Z" fill="#f5d547"/></svg>
<svg class="a" style="left:1334px;top:231.0px" width="37" height="37"><path d="M19.1 5.9 H4.6 V33.7 H32.4 V20" fill="none" stroke="#fff" stroke-width="4" stroke-linejoin="round"/><path d="M21.4 5.9 H32.4 V16" fill="none" stroke="#fff" stroke-width="4" stroke-linejoin="round"/><path d="M13.3 25.6 L31 7.6" stroke="#fff" stroke-width="3.8"/></svg>
<svg class="a" style="left:1334px;top:336.9px" width="37" height="38"><rect x="2.4" y="3.7" width="32.5" height="32.3" rx="3.5" fill="#fff"/><rect x="13.3" y="0.8" width="10.4" height="8" rx="4.5" fill="#fff"/><circle cx="18.5" cy="6.1" r="1.2" fill="#553a77"/><rect x="10.2" y="11.45" width="16.8" height="3.3" fill="#553a77"/><rect x="10.2" y="18.55" width="16.8" height="3.3" fill="#553a77"/><rect x="10.2" y="25.55" width="11.6" height="3.3" fill="#553a77"/></svg>
<svg class="a" style="left:1334px;top:445.3px" width="37" height="37"><rect x="2.4" y="1.9" width="32.35" height="31.8" rx="3.5" fill="#fff"/><rect x="9.9" y="14.7" width="3.2" height="11.8" rx="0.8" fill="#553a77"/><rect x="17" y="9.4" width="3.2" height="17.1" rx="0.8" fill="#553a77"/><rect x="24.1" y="19.7" width="3.2" height="6.8" rx="0.8" fill="#553a77"/></svg>
<svg class="a" style="left:1334px;top:548.2px" width="37" height="40"><rect x="4.5" y="5.5" width="28.3" height="31.2" rx="2.6" fill="none" stroke="#fff" stroke-width="4.2"/><rect x="13.3" y="0" width="10.4" height="8" rx="4.5" fill="#fff"/><rect x="9.5" y="3.4" width="18.2" height="9.7" fill="#fff"/><circle cx="18.5" cy="5.6" r="1.2" fill="#553a77"/></svg>
<div class="a" style="left:1451px;top:685px;width:48px;height:48px;border-radius:50%;background:#222;border:2px solid #c2c2c2"></div>
</body></html>
